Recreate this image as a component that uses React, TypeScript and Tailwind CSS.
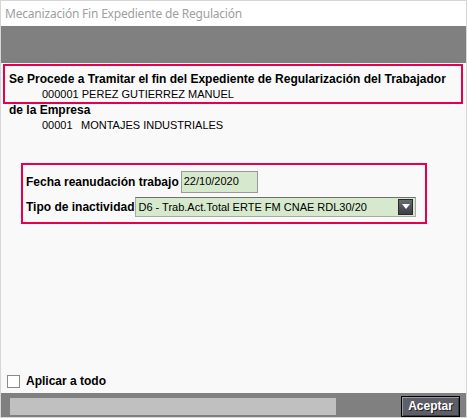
import React from "react";

export default function App() {
  return (
    <div className="w-[467px] h-[418px] border border-[#d6d6d6] bg-[#f9f9f9] flex flex-col font-['Liberation_Sans',Arial,sans-serif] text-[11px] leading-[15px] text-black overflow-hidden">
      {/* title bar */}
      <div className="h-[25px] bg-white flex items-center pl-[4px] pb-[1px] font-['Noto_Sans',sans-serif] text-[12px] text-[#a0a0a0] tracking-[-0.2px]">
        Mecanización Fin Expediente de Regulación
      </div>
      {/* gray band */}
      <div className="h-[37px] bg-[#808080]" />

      {/* body */}
      <div className="flex-1 flex flex-col">
        <div className="ml-[2px] mr-[3px] mt-[1px] h-[40px] border-2 border-[#e6004c] pt-[6px] pl-[4px]">
          <div className="font-bold text-[12px] whitespace-nowrap">
            Se Procede a Tramitar el fin del Expediente de Regularización del Trabajador
          </div>
          <div className="pl-[33px] whitespace-nowrap">000001 PEREZ GUTIERREZ MANUEL</div>
        </div>
        <div className="-mt-[1px] pl-[8px] font-bold text-[12px]">de la Empresa</div>
        <div className="pl-[41px] flex whitespace-nowrap">
          <span className="w-[39px]">00001</span>
          <span>MONTAJES INDUSTRIALES</span>
        </div>

        <div className="ml-[20px] mt-[30px] w-[406px] h-[61px] border-2 border-[#e6004c] pl-[3px] pt-[6px] flex flex-col gap-[4px]">
          <div className="flex items-center h-[22px]">
            <span className="font-bold text-[12px] whitespace-nowrap">Fecha reanudación trabajo</span>
            <div className="ml-[2px] w-[77px] h-[22px] bg-[#d6e9cd] border border-[#9a9a9a] pl-[2px] leading-[18px]">
              22/10/2020
            </div>
          </div>
          <div className="flex items-center h-[20px]">
            <span className="font-bold text-[12px] whitespace-nowrap">Tipo de inactividad</span>
            <div className="ml-[1px] w-[281px] h-[20px] bg-[#d6e9cd] border border-[#a8a8a8] border-t-[#6e6e6e] flex items-center pl-[2px] pr-[2px]">
              <span className="flex-1 whitespace-nowrap">D6 - Trab.Act.Total ERTE FM CNAE RDL30/20</span>
              <div className="w-[15px] h-[16px] bg-gradient-to-b from-[#6a6a72] to-[#3e3e46] border border-[#2a2a2a] flex items-center justify-center">
                <svg width="8" height="6" viewBox="0 0 8 6">
                  <path d="M0 0 H8 L4 5 Z" fill="#ffffff" />
                </svg>
              </div>
            </div>
          </div>
        </div>

        <div className="flex-1" />

        <div className="flex items-center h-[13px] mb-[5px] pl-[6px]">
          <div className="w-[13px] h-[13px] bg-white border border-[#8a8a8a]" />
          <span className="ml-[6px] font-bold text-[12px]">Aplicar a todo</span>
        </div>
      </div>

      {/* bottom bar */}
      <div className="h-[24px] bg-[#808080] flex items-start">
        <div className="ml-[9px] mt-[5px] w-[326px] h-[17px] bg-[#c0c0c0]" />
        <button className="ml-auto mr-[6px] mt-[3px] w-[59px] h-[21px] bg-[#5e5e68] border border-black shadow-[inset_1px_1px_0_#9a9aa4,inset_-1px_-1px_0_#3a3a40] text-white font-bold text-[12px] leading-[17px] [text-shadow:1px_1px_0_#222]">
          Aceptar
        </button>
      </div>
    </div>
  );
}
